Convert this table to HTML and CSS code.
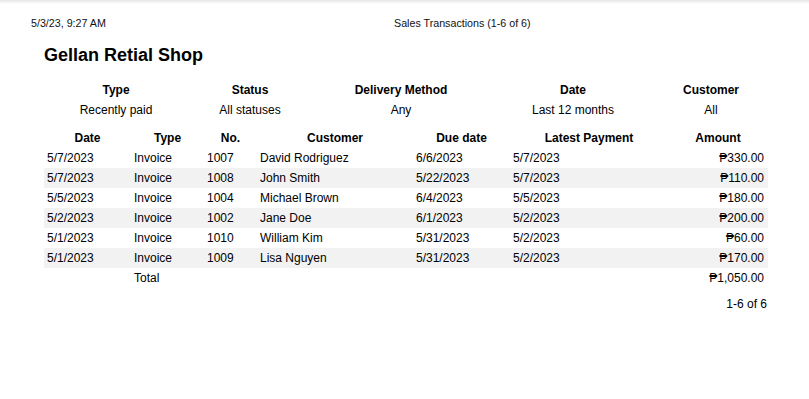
FILE: index.html
```html
<!DOCTYPE html>
<html>
<head>
<meta charset="utf-8">
<link rel="stylesheet" href="styles.css">
</head>
<body>
<div class="shadow"></div>
<div class="page">
  <div class="hdr">
    <div class="hdr-date">5/3/23, 9:27 AM</div>
    <div class="hdr-title">Sales Transactions (1-6 of 6)</div>
  </div>
  <div class="content">
    <h1 class="title">Gellan Retial Shop</h1>
    <div class="filters">
      <div class="f-label">Type</div>
      <div class="f-label">Status</div>
      <div class="f-label">Delivery Method</div>
      <div class="f-label">Date</div>
      <div class="f-label">Customer</div>
      <div class="f-value">Recently paid</div>
      <div class="f-value">All statuses</div>
      <div class="f-value">Any</div>
      <div class="f-value">Last 12 months</div>
      <div class="f-value">All</div>
    </div>
    <table class="tx">
      <colgroup>
        <col class="c-date"><col class="c-type"><col class="c-no"><col class="c-cust"><col class="c-due"><col class="c-pay"><col class="c-amt">
      </colgroup>
      <thead>
        <tr><th>Date</th><th>Type</th><th>No.</th><th>Customer</th><th>Due date</th><th>Latest Payment</th><th>Amount</th></tr>
      </thead>
      <tbody>
        <tr><td>5/7/2023</td><td>Invoice</td><td>1007</td><td>David Rodriguez</td><td>6/6/2023</td><td>5/7/2023</td><td class="amt">₱330.00</td></tr>
        <tr class="alt"><td>5/7/2023</td><td>Invoice</td><td>1008</td><td>John Smith</td><td>5/22/2023</td><td>5/7/2023</td><td class="amt">₱110.00</td></tr>
        <tr><td>5/5/2023</td><td>Invoice</td><td>1004</td><td>Michael Brown</td><td>6/4/2023</td><td>5/5/2023</td><td class="amt">₱180.00</td></tr>
        <tr class="alt"><td>5/2/2023</td><td>Invoice</td><td>1002</td><td>Jane Doe</td><td>6/1/2023</td><td>5/2/2023</td><td class="amt">₱200.00</td></tr>
        <tr><td>5/1/2023</td><td>Invoice</td><td>1010</td><td>William Kim</td><td>5/31/2023</td><td>5/2/2023</td><td class="amt">₱60.00</td></tr>
        <tr class="alt"><td>5/1/2023</td><td>Invoice</td><td>1009</td><td>Lisa Nguyen</td><td>5/31/2023</td><td>5/2/2023</td><td class="amt">₱170.00</td></tr>
        <tr><td></td><td>Total</td><td></td><td></td><td></td><td></td><td class="amt">₱1,050.00</td></tr>
      </tbody>
    </table>
    <div class="pager">1-6 of 6</div>
  </div>
</div>
</body>
</html>
```

FILE: styles.css
```css
html, body {
  margin: 0;
  padding: 0;
  background: #fff;
}
body {
  font-family: "Liberation Sans", Arial, "DejaVu Sans", sans-serif;
  color: #000;
  font-size: 12px;
}
.shadow {
  height: 4px;
  background: linear-gradient(#e6e6e6, #fff);
}
.page {
  padding-top: 13px;
}
.hdr {
  display: flex;
  padding-left: 31px;
  font-size: 10.7px;
  line-height: 13px;
  color: #111;
}
.hdr-date {
  width: 363px;
}
.content {
  padding-left: 44px;
  padding-top: 14px;
}
.title {
  margin: 0;
  font-size: 18px;
  line-height: 22px;
  font-weight: bold;
}
.filters {
  display: grid;
  grid-template-columns: 144px 124px 178px 166px 110px;
  grid-auto-rows: 20px;
  margin-top: 14px;
  line-height: 20px;
  text-align: center;
}
.f-label {
  font-weight: bold;
}
.tx {
  margin-top: 8px;
  border-collapse: collapse;
  table-layout: fixed;
  width: 724px;
  line-height: 20px;
}
.c-date { width: 87px; }
.c-type { width: 73px; }
.c-no { width: 53px; }
.c-cust { width: 156px; }
.c-due { width: 97px; }
.c-pay { width: 158px; }
.c-amt { width: 100px; }
.tx th {
  font-weight: bold;
  text-align: center;
  padding: 0;
  height: 20px;
}
.tx td {
  padding: 0 0 0 3px;
  height: 20px;
  white-space: nowrap;
  text-align: left;
}
.tx td.amt {
  text-align: right;
  padding: 0 4px 0 0;
}
.tx tr.alt td {
  background: #f2f2f2;
}
.pager {
  width: 723px;
  text-align: right;
  margin-top: 6px;
  line-height: 20px;
}
```
